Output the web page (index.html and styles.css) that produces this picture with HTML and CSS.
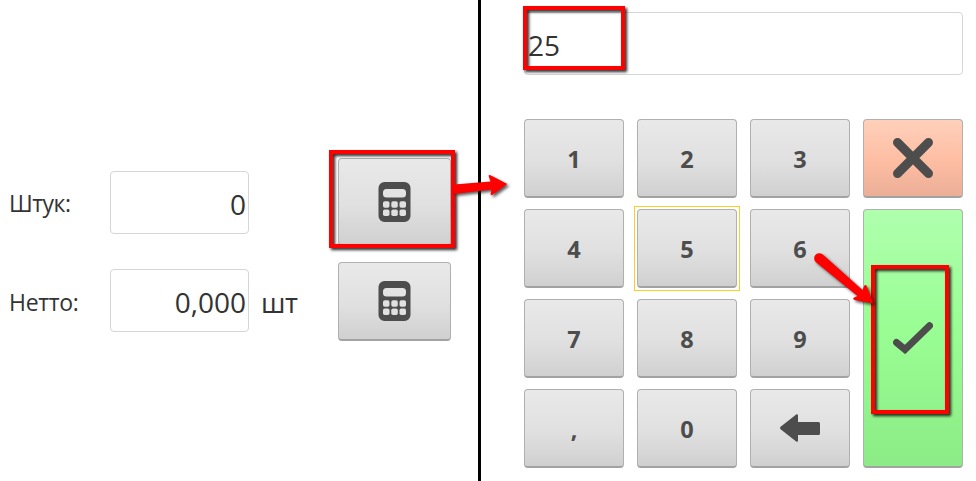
FILE: index.html
```html
<!DOCTYPE html>
<html lang="ru">
<head>
<meta charset="utf-8">
<title>Штук / Нетто</title>
<link rel="stylesheet" href="styles.css">
</head>
<body>
<svg class="defs" width="0" height="0">
  <symbol id="calc" viewBox="0 0 33 40">
    <path fill="#4d4d4d" fill-rule="evenodd" d="M6.500 0h20a6 6 0 0 1 6 6v28a6 6 0 0 1-6 6h-20a6 6 0 0 1-6-6V6a6 6 0 0 1 6-6zM8.500 7a3.500 3.500 0 0 0-3.500 3.500v1.500a3.500 3.500 0 0 0 3.500 3.500h16a3.500 3.500 0 0 0 3.500-3.500V10.500a3.500 3.500 0 0 0-3.500-3.500z"/>
    <g fill="#e0e0e0">
      <rect x="5" y="19.300" width="6.500" height="6.500" rx="1.800"/><rect x="13.300" y="19.300" width="6.500" height="6.500" rx="1.800"/><rect x="21.500" y="19.300" width="6.500" height="6.500" rx="1.800"/>
      <rect x="5" y="27.500" width="6.500" height="6.500" rx="1.800"/><rect x="13.300" y="27.500" width="6.500" height="6.500" rx="1.800"/><rect x="21.500" y="27.500" width="6.500" height="6.500" rx="1.800"/>
    </g>
  </symbol>
</svg>
<main class="screen">
  <section class="form">
    <div class="row">
      <span class="label">Штук:</span>
      <div class="field field-small">0</div>
      <span class="unit"></span>
      <button class="btn calc calc-tall"><svg width="33" height="40"><use href="#calc"/></svg></button>
    </div>
    <div class="row">
      <span class="label label-net">Нетто:</span>
      <div class="field field-small field-net">0,000</div>
      <span class="unit">шт</span>
      <button class="btn calc"><svg width="33" height="40"><use href="#calc"/></svg></button>
    </div>
  </section>
  <section class="pad">
    <div class="field field-wide">25</div>
    <div class="keys">
      <button class="btn">1</button>
      <button class="btn">2</button>
      <button class="btn">3</button>
      <button class="btn cancel"><svg width="40" height="40" viewBox="0 0 40 40"><path d="M4.500 4.500l31 31M35.500 4.500l-31 31" fill="none" stroke="#4d4d4d" stroke-width="9" stroke-linecap="round"/></svg></button>
      <button class="btn">4</button>
      <button class="btn focused">5</button>
      <button class="btn">6</button>
      <button class="btn accept"><svg width="40" height="32" viewBox="0 0 40 32"><path d="M3.500 20.500L12 27.500L36.500 3.800" fill="none" stroke="#4d4d4d" stroke-width="7" stroke-linecap="round"/></svg></button>
      <button class="btn">7</button>
      <button class="btn">8</button>
      <button class="btn">9</button>
      <button class="btn">,</button>
      <button class="btn">0</button>
      <button class="btn"><svg width="40" height="28" viewBox="0 0 40 28"><path d="M0.600 12.800L16.500 0.300Q18 0 18 1.500V8H38.500Q40 8 40 9.500V19.500Q40 21 38.500 21H18V26.500Q18 28 16.500 27.700L0.600 15.200Q-0.500 14 0.600 12.800z" fill="#4d4d4d"/></svg></button>
    </div>
  </section>
  <div class="mark mark-calc"></div>
  <div class="mark mark-value"></div>
  <div class="mark mark-accept"></div>
  <svg class="arrows" width="976" height="481" viewBox="0 0 976 481">
    <path d="M454 184.500L490.500 181.500L488.600 176Q488.500 174.500 490.500 175.200L507.300 184L492.500 194.800Q490.500 196 490.600 194L491.500 189.500L456 193.700Q453 193 453 189z"/>
    <path d="M822.500 254.300L862.500 290L864.300 285.500Q866 284.200 866.700 286L873.300 303.500L854.500 300Q852.200 299 854 297.500L857.500 296L816 262.200A5 5 0 0 1 822.500 254.300z"/>
  </svg>
</main>
</body>
</html>
```
FILE: styles.css
```css
* { box-sizing: border-box; }

body {
  margin: 0;
  background: #fff;
  color: #333;
  font-family: "Open Sans", "Noto Sans", sans-serif;
}

.defs { position: absolute; }

.screen {
  position: relative;
  display: flex;
  width: 976px;
  height: 481px;
  overflow: hidden;
}

.form {
  width: 481px;
  padding: 153px 27px 0 9px;
  border-right: 3px solid #000;
}

.row {
  display: flex;
  align-items: center;
  height: 98px;
}

.row + .row { margin-top: 1px; }

.row > * { flex-shrink: 0; }

.label {
  width: 101px;
  padding-top: 2px;
  font-size: 23px;
  line-height: 30px;
  letter-spacing: -0.5px;
  white-space: nowrap;
}

.label-net { letter-spacing: -0.3px; }

.field {
  display: flex;
  align-items: center;
  height: 63px;
  border: 1px solid #d6d6d6;
  border-radius: 4px;
  background: #fff;
  font-size: 28px;
  line-height: 36px;
}

.field-small {
  width: 139px;
  justify-content: flex-end;
  padding: 4px 2px 0 0;
}

.field-net { margin-bottom: 2px; }

.field-wide {
  width: 439px;
  padding: 2px 0 0 3px;
}

.unit {
  width: 89px;
  padding: 3px 0 0 12px;
  font-size: 27.5px;
  line-height: 36px;
  letter-spacing: -0.5px;
}

.btn {
  display: flex;
  align-items: center;
  justify-content: center;
  padding: 1px 0 0;
  border: 1px solid #b0b0b0;
  border-bottom: 2px solid #a2a2a2;
  border-radius: 4px;
  background: linear-gradient(#e9e9e9, #e0e0e0 55%, #d0d0d0);
  color: #4d4d4d;
  font: 700 23.5px/32px "Open Sans", "Noto Sans", sans-serif;
}

.calc {
  width: 113px;
  height: 79px;
}

.calc-tall { height: 88px; }

.pad { padding: 12px 0 0 43px; }

.keys {
  display: grid;
  grid-template-columns: repeat(4, 100px);
  grid-template-rows: repeat(4, 79px);
  gap: 11px 13px;
  margin-top: 44px;
}

.keys svg { margin-bottom: 2px; }

.focused { position: relative; }

.focused::after {
  content: "";
  position: absolute;
  inset: -4px -4px -5px;
  border: 1px solid #fc2;
}

.cancel { background: linear-gradient(#ffd0ba, #fdbda3 55%, #ecae97); }

.accept {
  grid-column: 4;
  grid-row: 2 / 5;
  background: linear-gradient(#afffad, #98fd92 50%, #8ceb86);
}

.mark {
  position: absolute;
  border: 4px solid #f00;
  filter: drop-shadow(2px 2px 1.5px rgba(0, 0, 0, 0.85));
}

.mark-calc { left: 329px; top: 150px; width: 126px; height: 98px; }
.mark-value { left: 523px; top: 6px; width: 102px; height: 64px; }
.mark-accept { left: 871px; top: 265px; width: 78px; height: 149px; }

.arrows {
  position: absolute;
  left: 0;
  top: 0;
  fill: #f00;
  filter: drop-shadow(2px 2px 1.5px rgba(0, 0, 0, 0.65));
  pointer-events: none;
}
```
